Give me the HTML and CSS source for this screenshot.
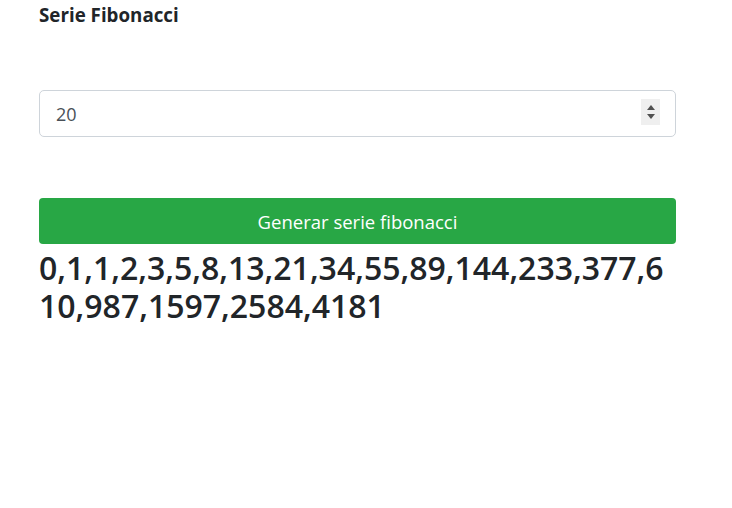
FILE: index.html
```html
<!DOCTYPE html>
<html lang="es">
<head>
<meta charset="utf-8">
<title>Serie Fibonacci</title>
<link rel="stylesheet" href="styles.css">
</head>
<body>
<main class="container">
  <label class="title" for="n">Serie Fibonacci</label>
  <div class="field">
    <input id="n" class="input" type="number" value="20">
    <span class="spin" aria-hidden="true"><span class="up"></span><span class="down"></span></span>
  </div>
  <button class="btn" type="button">Generar serie fibonacci</button>
  <h2 class="result">0,1,1,2,3,5,8,13,21,34,55,89,144,233,377,610,987,1597,2584,4181</h2>
</main>
</body>
</html>
```

FILE: styles.css
```css
html, body {
  margin: 0;
  padding: 0;
  background: #fff;
}
body {
  font-family: "Open Sans", "Noto Sans", sans-serif;
  color: #212529;
}
.container {
  width: 637px;
  margin-left: 39px;
  display: flex;
  flex-direction: column;
}
.title {
  font-size: 18.75px;
  font-weight: 700;
  line-height: 24px;
  margin-top: 3px;
}
.field {
  position: relative;
  margin-top: 63px;
}
.input {
  box-sizing: border-box;
  width: 100%;
  height: 47px;
  padding: 8px 16px;
  font-family: inherit;
  font-size: 18px;
  color: #495057;
  border: 1px solid #ced4da;
  border-radius: 5px;
  outline: none;
  -moz-appearance: textfield;
}
.input::-webkit-inner-spin-button,
.input::-webkit-outer-spin-button {
  -webkit-appearance: none;
  margin: 0;
}
.spin {
  position: absolute;
  left: 602px;
  top: 9px;
  width: 19px;
  height: 26px;
  background: #efefef;
  display: flex;
  flex-direction: column;
  align-items: center;
  justify-content: center;
  gap: 4px;
}
.up {
  width: 0;
  height: 0;
  border-left: 4px solid transparent;
  border-right: 4px solid transparent;
  border-bottom: 5px solid #505050;
}
.down {
  width: 0;
  height: 0;
  border-left: 4px solid transparent;
  border-right: 4px solid transparent;
  border-top: 5px solid #505050;
}
.btn {
  margin-top: 61px;
  height: 46px;
  border: 0;
  border-radius: 4px;
  background: #28a745;
  color: #fff;
  font-family: inherit;
  font-size: 18.5px;
  cursor: pointer;
}
.result {
  margin: 5px 0 0;
  font-size: 32px;
  font-weight: 600;
  line-height: 38.4px;
  overflow-wrap: anywhere;
}
```
